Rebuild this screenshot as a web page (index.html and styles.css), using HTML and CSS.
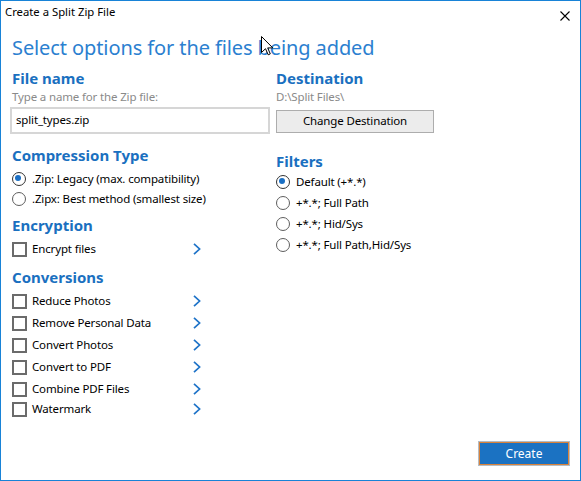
FILE: index.html
```html
<!DOCTYPE html>
<html>
<head>
<meta charset="utf-8">
<title>Create a Split Zip File</title>
<link rel="stylesheet" href="styles.css">
</head>
<body>
<div class="window">
  <div class="titlebar">
    <span class="title">Create a Split Zip File</span>
    <svg class="close" width="10" height="10" viewBox="0 0 10 10"><path d="M0.5 0.5 L9.5 9.5 M9.5 0.5 L0.5 9.5" stroke="#000" stroke-width="1.1" fill="none"/></svg>
  </div>
  <div class="body">
    <h1 class="headline">Select options for the files being added</h1>
    <div class="columns">
      <div class="col">
        <h2 class="section">File name</h2>
        <div class="hint">Type a name for the Zip file:</div>
        <div class="textbox">split_types.zip</div>

        <h2 class="section sec-compress">Compression Type</h2>
        <div class="radios">
          <div class="opt"><span class="radio checked"></span><span>.Zip: Legacy (max. compatibility)</span></div>
          <div class="opt"><span class="radio"></span><span>.Zipx: Best method (smallest size)</span></div>
        </div>

        <h2 class="section sec-encrypt">Encryption</h2>
        <div class="checks">
          <div class="opt"><span class="check"></span><span class="label">Encrypt files</span><svg class="chev" width="8" height="12" viewBox="0 0 8 12"><path d="M1 0.8 L6.6 6 L1 11.2" stroke="#1e73c8" stroke-width="1.7" fill="none"/></svg></div>
        </div>

        <h2 class="section sec-conv">Conversions</h2>
        <div class="checks conv">
          <div class="opt"><span class="check"></span><span class="label">Reduce Photos</span><svg class="chev" width="8" height="12" viewBox="0 0 8 12"><path d="M1 0.8 L6.6 6 L1 11.2" stroke="#1e73c8" stroke-width="1.7" fill="none"/></svg></div>
          <div class="opt"><span class="check"></span><span class="label">Remove Personal Data</span><svg class="chev" width="8" height="12" viewBox="0 0 8 12"><path d="M1 0.8 L6.6 6 L1 11.2" stroke="#1e73c8" stroke-width="1.7" fill="none"/></svg></div>
          <div class="opt"><span class="check"></span><span class="label">Convert Photos</span><svg class="chev" width="8" height="12" viewBox="0 0 8 12"><path d="M1 0.8 L6.6 6 L1 11.2" stroke="#1e73c8" stroke-width="1.7" fill="none"/></svg></div>
          <div class="opt"><span class="check"></span><span class="label">Convert to PDF</span><svg class="chev" width="8" height="12" viewBox="0 0 8 12"><path d="M1 0.8 L6.6 6 L1 11.2" stroke="#1e73c8" stroke-width="1.7" fill="none"/></svg></div>
          <div class="opt"><span class="check"></span><span class="label">Combine PDF Files</span><svg class="chev" width="8" height="12" viewBox="0 0 8 12"><path d="M1 0.8 L6.6 6 L1 11.2" stroke="#1e73c8" stroke-width="1.7" fill="none"/></svg></div>
          <div class="opt last"><span class="check"></span><span class="label">Watermark</span><svg class="chev" width="8" height="12" viewBox="0 0 8 12"><path d="M1 0.8 L6.6 6 L1 11.2" stroke="#1e73c8" stroke-width="1.7" fill="none"/></svg></div>
        </div>
      </div>

      <div class="col">
        <h2 class="section">Destination</h2>
        <div class="hint">D:\Split Files\</div>
        <button class="btn">Change Destination</button>

        <h2 class="section sec-filters">Filters</h2>
        <div class="radios filters">
          <div class="opt"><span class="radio checked"></span><span>Default (+*.*)</span></div>
          <div class="opt"><span class="radio"></span><span>+*.*; Full Path</span></div>
          <div class="opt"><span class="radio"></span><span>+*.*; Hid/Sys</span></div>
          <div class="opt"><span class="radio"></span><span>+*.*; Full Path,Hid/Sys</span></div>
        </div>
      </div>
    </div>
    <div class="footer">
      <button class="primary">Create</button>
    </div>
  </div>
  <svg class="cursor" width="13" height="20" viewBox="0 0 13 20"><path d="M0.5 0.5 L0.5 16.5 L4.5 12.7 L7.2 18.8 L9.3 17.9 L6.7 11.9 L11.8 11.9 Z" fill="#fff" stroke="#000" stroke-width="1" stroke-linejoin="miter"/></svg>
</div>
</body>
</html>
```
FILE: styles.css
```css
* { box-sizing: border-box; }
html, body { margin: 0; padding: 0; background: #fff; }
body {
  font-family: "Noto Sans", "Open Sans", sans-serif;
  font-size: 11.5px;
  letter-spacing: -0.15px;
  color: #000;
}
.window {
  position: relative;
  width: 581px;
  height: 481px;
  border: 1px solid #1883d7;
  background: #fff;
  display: flex;
  flex-direction: column;
}
.titlebar {
  height: 30px;
  display: flex;
  justify-content: space-between;
  align-items: flex-start;
  padding: 3px 10px 0 4px;
}
.title { line-height: 16px; font-size: 11.3px; letter-spacing: 0; }
.close { margin-top: 7px; }
.body {
  flex: 1;
  display: flex;
  flex-direction: column;
  padding: 0 10px 14px 11px;
}
.headline {
  margin: 3px 0 0 0;
  font-size: 20px;
  font-weight: 400;
  line-height: 28px;
  letter-spacing: -0.1px;
  color: #2b80d0;
}
.columns {
  margin-top: 6px;
  display: grid;
  grid-template-columns: 264px 1fr;
}
.col { display: flex; flex-direction: column; align-items: flex-start; }
.section {
  margin: 0;
  font-size: 15px;
  font-weight: 700;
  line-height: 20px;
  letter-spacing: 0;
  color: #1a70c0;
}
.hint {
  margin-top: 1px;
  line-height: 16px;
  color: #8a8a8a;
}
.textbox {
  margin: 2px 0 0 -2px;
  width: 260px;
  height: 27px;
  border: 2px solid #d6d6d6;
  padding: 0 4px 2px 4px;
  line-height: 21px;
}
.btn {
  margin-top: 5px;
  width: 158px;
  height: 23px;
  border: 1px solid #adadad;
  background: #ececec;
  font-family: inherit;
  font-size: 11.5px;
  letter-spacing: -0.15px;
  color: #000;
  line-height: 19px;
  padding: 0 0 2px 0;
}
.sec-compress { margin-top: 11px; }
.sec-encrypt { margin-top: 6px; }
.sec-conv { margin-top: 8px; }
.sec-filters { margin-top: 18px; }
.radios, .checks { margin-top: 4px; display: flex; flex-direction: column; width: 100%; }
.conv { margin-top: 3px; }
.opt {
  display: flex;
  align-items: center;
  height: 20px;
  line-height: 20px;
}
.conv .opt { height: 22px; }
.conv .opt.last { margin-top: -2px; }
.filters { margin-top: 0; }
.filters .opt { height: 21px; }
.radio {
  width: 14px;
  height: 14px;
  border: 1.6px solid #5e5e5e;
  border-radius: 50%;
  margin-right: 6px;
  position: relative;
  flex: none;
}
.radio.checked { border-color: #333; }
.radio.checked::after {
  content: "";
  position: absolute;
  left: 2.4px;
  top: 2.4px;
  width: 6px;
  height: 6px;
  border-radius: 50%;
  background: #1a6fc4;
}
.check {
  width: 15px;
  height: 15px;
  border: 2px solid #6b6b6b;
  margin-right: 5px;
  flex: none;
}
.label { width: 161px; }
.chev { flex: none; }
.footer {
  margin-top: auto;
  display: flex;
  justify-content: flex-end;
}
.primary {
  width: 92px;
  height: 25px;
  border: 1px solid #b4bcc4;
  box-shadow: inset 0 0 0 1px #d9823a;
  background: #1b72c2;
  color: #fff;
  font-family: inherit;
  font-size: 12px;
  letter-spacing: 0;
  padding: 0 0 1px 0;
}
.cursor {
  position: absolute;
  left: 260px;
  top: 35px;
}
```
